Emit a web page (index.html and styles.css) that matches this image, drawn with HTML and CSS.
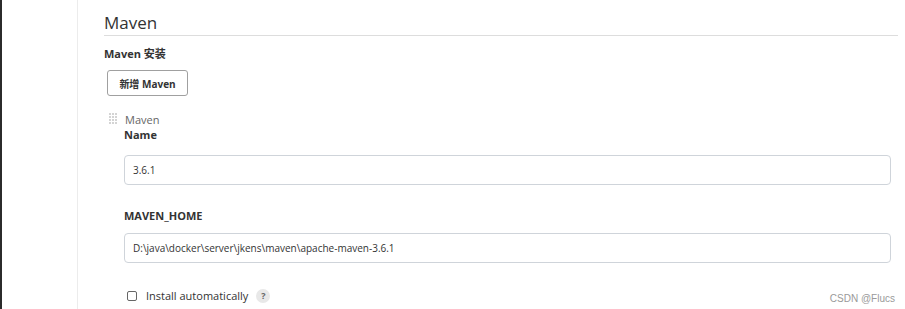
FILE: index.html
```html
<!DOCTYPE html>
<html lang="zh-CN">
<head>
    <meta charset="UTF-8">
    <title>Maven</title>
    <link rel="stylesheet" href="styles.css">
</head>
<body>
<div class="pagina">
    <div class="borde"></div>
    <div class="lateral"></div>
    <div class="contenido">
        <h2 class="titulo">Maven</h2>
        <h4 class="subtitulo">Maven 安装</h4>
        <button class="boton">新增 Maven</button>

        <div class="bloque">
            <div class="bloque-cab">
                <svg class="grip" width="10" height="13" viewBox="0 0 10 13">
                    <g fill="#d4d4d4">
                        <rect x="0" y="0" width="2" height="2"/><rect x="3" y="0" width="2" height="2"/><rect x="6" y="0" width="2" height="2"/>
                        <rect x="0" y="3" width="2" height="2"/><rect x="3" y="3" width="2" height="2"/><rect x="6" y="3" width="2" height="2"/>
                        <rect x="0" y="6" width="2" height="2"/><rect x="3" y="6" width="2" height="2"/><rect x="6" y="6" width="2" height="2"/>
                        <rect x="0" y="9" width="2" height="2"/><rect x="3" y="9" width="2" height="2"/><rect x="6" y="9" width="2" height="2"/>
                    </g>
                </svg>
                <span class="bloque-nombre">Maven</span>
            </div>
            <div class="campos">
                <div class="etiqueta">Name</div>
                <input class="entrada" type="text" value="3.6.1">
                <div class="etiqueta etiqueta-sep">MAVEN_HOME</div>
                <input class="entrada entrada-home" type="text" value="D:\java\docker\server\jkens\maven\apache-maven-3.6.1">
                <label class="check">
                    <span class="caja"></span>
                    <span>Install automatically</span>
                    <span class="ayuda">?</span>
                </label>
            </div>
        </div>
    </div>
</div>
<span class="marca">CSDN @Flucs</span>
</body>
</html>
```

FILE: styles.css
```css
/* estilos de la pagina de herramientas */
body {
    margin: 0;
    background: #ffffff;
    color: #333333;
    font-family: "Open Sans", "Noto Sans CJK SC", sans-serif;
    height: 309px;
    overflow: hidden;
}
.pagina {
    display: flex;
    height: 309px;
}
.borde {
    width: 2px;
    background: #2b2b2b;
}
.lateral {
    width: 75px;
    border-right: 1px solid #ececec;
}
.contenido {
    flex: 1;
    padding: 0 7px 0 26px;
}
.titulo {
    margin: 12px 0 0;
    font-size: 17px;
    font-weight: 400;
    line-height: 22px;
    padding-bottom: 1px;
    border-bottom: 1px solid #dddddd;
}
.subtitulo {
    margin: 10px 0 0;
    font-size: 11px;
    font-weight: 700;
    line-height: 16px;
}
.boton {
    margin: 8px 0 0 3px;
    width: 81px;
    height: 26px;
    background: #ffffff;
    border: 1px solid #a0a0a0;
    border-radius: 3px;
    font-family: inherit;
    font-size: 10px;
    font-weight: 700;
    color: #333333;
}
.bloque {
    margin: 16px 0 0 5px;
}
.bloque-cab {
    display: flex;
    align-items: center;
    height: 14px;
}
.grip {
    display: block;
}
.bloque-nombre {
    margin-left: 6px;
    font-size: 11px;
    color: #666666;
}
.campos {
    padding-left: 15px;
    padding-right: 7px;
}
.etiqueta {
    font-size: 11px;
    font-weight: 700;
    line-height: 16px;
    margin-top: 1px;
}
.etiqueta-sep {
    margin-top: 23px;
}
.entrada {
    display: block;
    box-sizing: border-box;
    width: 100%;
    height: 30px;
    margin: 12px 0 0 0;
    padding: 0 8px;
    border: 1px solid #cfd4da;
    border-radius: 4px;
    font-family: inherit;
    font-size: 10px;
    color: #333333;
}
.entrada-home {
    margin-top: 9px;
}
.check {
    display: flex;
    align-items: center;
    margin-top: 25px;
    font-size: 11px;
    color: #333333;
}
.caja {
    width: 8px;
    height: 8px;
    border: 1px solid #666666;
    border-radius: 2px;
    margin: 0 9px 0 3px;
}
.ayuda {
    width: 14px;
    height: 14px;
    border-radius: 50%;
    background: #e8e8e8;
    color: #666666;
    font-size: 9px;
    font-weight: 700;
    text-align: center;
    line-height: 14px;
    margin-left: 8px;
}
.marca {
    position: absolute;
    right: 10px;
    bottom: 5px;
    font-family: "Liberation Sans", sans-serif;
    font-size: 10px;
    color: #9a9a9a;
}
```
